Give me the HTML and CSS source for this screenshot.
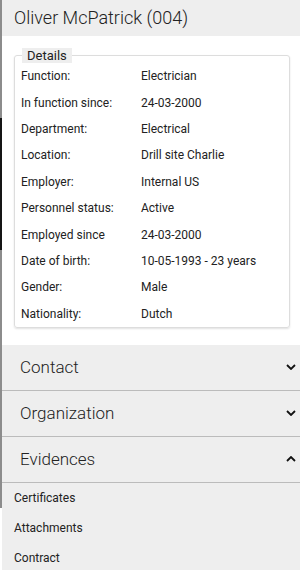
FILE: index.html
```html
<!DOCTYPE html>
<html lang="en">
<head>
  <meta charset="UTF-8">
  <meta name="viewport" content="width=device-width, initial-scale=1.0">
  <title>Oliver McPatrick (004)</title>
  <link rel="stylesheet" href="styles.css">
</head>
<body>

  <div class="edge">
    <div class="edge-top"></div>
    <div class="edge-dark"></div>
    <div class="edge-bottom"></div>
  </div>

  <div class="panel">
    <h2 class="titulo">Oliver McPatrick (004)</h2>

    <div class="conteudo">
      <fieldset class="details">
        <legend>Details</legend>
        <div class="linhas">
          <span>Function:</span><span>Electrician</span>
          <span>In function since:</span><span>24-03-2000</span>
          <span>Department:</span><span>Electrical</span>
          <span>Location:</span><span>Drill site Charlie</span>
          <span>Employer:</span><span>Internal US</span>
          <span>Personnel status:</span><span>Active</span>
          <span>Employed since</span><span>24-03-2000</span>
          <span>Date of birth:</span><span>10-05-1993 - 23 years</span>
          <span>Gender:</span><span>Male</span>
          <span>Nationality:</span><span>Dutch</span>
        </div>
      </fieldset>
    </div>

    <div class="secao">
      <span>Contact</span>
      <svg class="seta" width="10" height="6" viewBox="0 0 10 6"><path d="M1 1 L5 5 L9 1" fill="none" stroke="#111" stroke-width="1.8"/></svg>
    </div>
    <div class="secao">
      <span>Organization</span>
      <svg class="seta" width="10" height="6" viewBox="0 0 10 6"><path d="M1 1 L5 5 L9 1" fill="none" stroke="#111" stroke-width="1.8"/></svg>
    </div>
    <div class="secao">
      <span>Evidences</span>
      <svg class="seta" width="10" height="6" viewBox="0 0 10 6"><path d="M1 5 L5 1 L9 5" fill="none" stroke="#111" stroke-width="1.8"/></svg>
    </div>

    <ul class="itens">
      <li>Certificates</li>
      <li>Attachments</li>
      <li>Contract</li>
    </ul>
  </div>

</body>
</html>
```

FILE: styles.css
```css
* {
  box-sizing: border-box;
}

body {
  font-family: Roboto, 'Liberation Sans', sans-serif;
  background: #fff;
  margin: 0;
  display: flex;
  color: #222;
  min-height: 570px;
}

.edge {
  width: 2px;
  flex-shrink: 0;
  display: flex;
  flex-direction: column;
}

.edge-top { height: 118px; background: #8c8c8c; }
.edge-dark { height: 132px; background: #151515; }
.edge-bottom { height: 258px; background: #8c8c8c; }

.panel {
  flex: 1;
  background: #eee;
}

.titulo {
  margin: 0;
  height: 36px;
  padding-left: 12px;
  font-size: 18px;
  font-weight: 300;
  line-height: 36px;
  color: #222;
}

.conteudo {
  background: #fff;
  padding: 12px 10px 17px 12px;
}

.details {
  margin: 0;
  padding: 0 6px;
  border: 1px solid #ddd;
  border-radius: 3px;
  box-shadow: 0 1px 2px rgba(0, 0, 0, 0.12);
}

.details legend {
  background: #eee;
  font-size: 13px;
  line-height: 15px;
  padding: 0 5px;
  margin-left: 1px;
  color: #222;
}

.linhas {
  display: grid;
  grid-template-columns: 120px 1fr;
  grid-auto-rows: 26.4px;
  align-items: center;
  font-size: 12px;
}

.secao {
  display: flex;
  align-items: center;
  justify-content: space-between;
  height: 46px;
  padding: 0 4px 0 18px;
  border-bottom: 1px solid #bbb;
  font-size: 17px;
  font-weight: 300;
  color: #222;
}

.secao:first-of-type {
  height: 45px;
}

.seta {
  display: block;
}

.itens {
  list-style: none;
  margin: 0;
  padding: 0;
}

.itens li {
  height: 30px;
  line-height: 30px;
  padding-left: 12px;
  font-size: 12px;
  color: #222;
}
```
